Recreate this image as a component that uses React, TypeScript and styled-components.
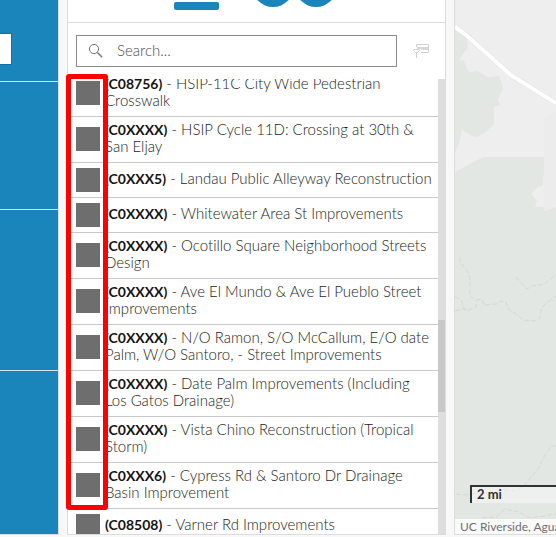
import React from "react";
import styled, { createGlobalStyle } from "styled-components";

const GlobalStyle = createGlobalStyle`
  *, *::before, *::after { box-sizing: border-box; }
  body {
    margin: 0;
    background: #f8f8f8;
    font-family: Lato, "Open Sans", sans-serif;
    font-variant-ligatures: none;
    color: #1c1c1c;
  }
`;

const Page = styled.main`
  display: grid;
  grid-template-columns: 59px minmax(0, 379fr) minmax(0, 102fr);
  column-gap: 8px;
  height: 100vh;
  padding-bottom: 2px;
  overflow: hidden;
`;

const Filters = styled.aside`
  display: flex;
  flex-direction: column;
  background: #1a85bb;
  border-right: 1px solid #dcdcdc;
  border-bottom: 1px solid #dcdcdc;
`;

const FilterBlock = styled.div<{ $height: number }>`
  flex: none;
  height: ${(p) => p.$height}px;
  padding-top: 33px;
  border-bottom: 1px solid #d3e6f0;
`;

const FilterInput = styled.input`
  display: block;
  width: 12px;
  height: 32px;
  padding: 0;
  background: #fff;
  border: 1px solid #0f6fa8;
  border-left: 0;
  outline: 0;
`;

const Panel = styled.section`
  display: flex;
  flex-direction: column;
  min-width: 0;
  min-height: 0;
  background: #fff;
  border: 1px solid #dcdcdc;
  border-top: 0;
`;

const PanelHeader = styled.header`
  flex: none;
  height: 23px;
  border-bottom: 1px solid #dcdcdc;
  text-align: center;

  svg { display: block; margin: 0 auto; }
`;

const SearchRow = styled.form`
  flex: none;
  display: flex;
  align-items: center;
  gap: 16px;
  padding: 12px 16px 12px 8px;
`;

const SearchBox = styled.label`
  flex: 1;
  min-width: 0;
  display: flex;
  align-items: center;
  gap: 13px;
  height: 32px;
  padding: 0 11px;
  border: 1px solid #8c8c8c;
`;

const SearchInput = styled.input`
  flex: 1;
  min-width: 0;
  padding: 0 0 2px;
  border: 0;
  outline: 0;
  background: none;
  font: 300 15px/20px Lato, sans-serif;
  color: #1c1c1c;

  &::placeholder { color: #4c4c4c; opacity: 1; }
`;

const IconButton = styled.button`
  display: flex;
  padding: 0;
  border: 0;
  background: none;
`;

const ListArea = styled.div`
  position: relative;
  flex: 1;
  min-height: 0;
  display: flex;
`;

const ListViewport = styled.div`
  flex: 1;
  min-width: 0;
  overflow: hidden;
`;

const List = styled.ul`
  margin: -8px 0 0;
  padding: 0;
  list-style: none;
`;

const Row = styled.li`
  display: flex;
  align-items: center;
  gap: 5px;
  min-height: 35px;
  padding: 0 0 1px 8px;
  border-bottom: 1px solid #c9c9c9;
`;

const Swatch = styled.span`
  flex: none;
  width: 24px;
  height: 24px;
  background: #6e6e6e;
`;

const RowText = styled.span`
  padding: 4px 0 6px;
  font-size: 15px;
  font-weight: 300;
  line-height: 17px;
  white-space: nowrap;
`;

const Code = styled.strong`
  font-size: 14px;
  font-weight: 700;
  color: #141414;
`;

const ScrollTrack = styled.div`
  flex: none;
  width: 8px;
  margin-right: -1px;
  padding-top: 241px;
  background: #dedede;
`;

const ScrollThumb = styled.div`
  width: 7px;
  height: 92px;
  background: #c8c8c8;
`;

const Highlight = styled.div`
  position: absolute;
  left: -2px;
  top: -5px;
  bottom: 24px;
  width: 42px;
  border: 5px solid #f00;
  border-radius: 3px;
  pointer-events: none;
`;

const MapPane = styled.section`
  position: relative;
  overflow: hidden;
  background: #e2e7e3;
  border-left: 1px solid #dcdcdc;
  border-bottom: 1px solid #dcdcdc;
`;

const MapDrawing = styled.svg`
  display: block;
  width: 100%;
  height: 100%;
`;

const ScaleBar = styled.div`
  position: absolute;
  left: 15px;
  right: 0;
  bottom: 31px;
  height: 18px;
  padding-left: 5px;
  border-left: 2px solid #323232;
  border-top: 2px solid #323232;
  background: rgba(255, 255, 255, 0.4);
  font-size: 13px;
  font-weight: 700;
  line-height: 14px;
  color: #323232;
`;

const Attribution = styled.div`
  position: absolute;
  left: 0;
  right: 0;
  bottom: 0;
  padding-left: 5px;
  background: rgba(255, 255, 255, 0.8);
  font-size: 12px;
  line-height: 15px;
  white-space: nowrap;
  color: #6e6e6e;
`;

const projects = [
  { code: "C08756", lines: ["HSIP-11C City Wide Pedestrian", "Crosswalk"] },
  { code: "C0XXXX", lines: ["HSIP Cycle 11D: Crossing at 30th &", "San Eljay"] },
  { code: "C0XXX5", lines: ["Landau Public Alleyway Reconstruction"] },
  { code: "C0XXXX", lines: ["Whitewater Area St Improvements"] },
  { code: "C0XXXX", lines: ["Ocotillo Square Neighborhood Streets", "Design"] },
  { code: "C0XXXX", lines: ["Ave El Mundo & Ave El Pueblo Street", "Improvements"] },
  { code: "C0XXXX", lines: ["N/O Ramon, S/O McCallum, E/O date", "Palm, W/O Santoro, - Street Improvements"] },
  { code: "C0XXXX", lines: ["Date Palm Improvements (Including", "Los Gatos Drainage)"] },
  { code: "C0XXXX", lines: ["Vista Chino Reconstruction (Tropical", "Storm)"] },
  { code: "C0XXX6", lines: ["Cypress Rd & Santoro Dr Drainage", "Basin Improvement"] },
  { code: "C08508", lines: ["Varner Rd Improvements"] },
];

function HeaderDrawing() {
  return (
    <svg width="166" height="22" viewBox="0 0 166 22" aria-hidden="true">
      <rect x="0" y="2" width="45" height="8" rx="2" fill="#1a85bb" />
      <circle cx="99" cy="-14" r="21" fill="#1a85bb" />
      <circle cx="142" cy="-14" r="21" fill="#1a85bb" />
    </svg>
  );
}

function SearchIcon() {
  return (
    <svg width="16" height="16" viewBox="0 0 16 16" fill="none" stroke="#757575" aria-hidden="true">
      <circle cx="6" cy="6" r="4.6" />
      <path d="M9.4 9.4 14.2 14.2" strokeWidth="1.4" />
    </svg>
  );
}

function FilterIcon() {
  return (
    <svg width="16" height="16" viewBox="0 0 16 16" fill="none" stroke="#d2d2d2" aria-hidden="true">
      <path d="M3.5 4V1.5H15.500V9.500H8" />
      <path d="M4 4H15V7H8V6H4Z" fill="#d8d8d8" stroke="none" />
      <path d="M.5 6.500H6.500V7.500L4.500 9.500H2.500L.5 7.500ZM3.500 9.500V15" fill="#fff" />
    </svg>
  );
}

function BaseMap() {
  return (
    <MapDrawing viewBox="0 0 101 534" preserveAspectRatio="xMinYMin slice" aria-hidden="true">
      <path
        d="M0 0H101V207L90 211 89 207H80L82 200 76 194 83 187 88 186 89 169 95 168 96 157H28L0 172Z"
        fill="#eeeeee"
      />
      <path d="M89 118 101 112V207L90 211 89 207Z" fill="#ececec" />
      <path
        d="M0 30 12 39 13 47 4 60 9 61 11 67 15 72 22 71 33 77 44 76 48 88 43 99 45 105 39 107V124L31 132 22 137 16 135 7 130 4 143 0 153Z"
        fill="#e2e7e3"
      />
      <path d="M0 27 10 34 57 76 101 103" fill="none" stroke="#e4e4e4" strokeWidth="5" />
      <path d="M0 27 10 34 57 76 101 103" fill="none" stroke="#fff" strokeWidth="4" />
      <g fill="none" stroke="#d3d9d5" strokeDasharray="5 2">
        <path d="M5 257V262L13 272 15 278V295L20 300 27 299 29 305 42 304 46 301 51 302 53 309 61 314 68 320 81 321 85 318 86 310 90 304 101 296" />
        <path d="M0 296 7 301 8 308 14 310 21 307 23 300M0 311 7 309 14 311" />
        <path d="M61 277 72 289 77 286 90 284 95 279 101 275" />
        <path d="M101 446H96L90 455 83 469 76 477 69 486 61 491 48 490 35 494 24 493 9 495 0 494" />
        <path d="M27 518 41 517 50 509 64 512 72 517 84 517 101 514" />
      </g>
    </MapDrawing>
  );
}

export default function App() {
  return (
    <>
      <GlobalStyle />
      <Page>
        <Filters>
          <FilterBlock $height={82}>
            <FilterInput aria-label="Filter value" />
          </FilterBlock>
          <FilterBlock $height={128} />
          <FilterBlock $height={161} />
        </Filters>

        <Panel>
          <PanelHeader>
            <HeaderDrawing />
          </PanelHeader>
          <SearchRow role="search">
            <SearchBox>
              <SearchIcon />
              <SearchInput type="text" aria-label="Search" placeholder="Search..." />
            </SearchBox>
            <IconButton type="button" aria-label="Filter list" disabled>
              <FilterIcon />
            </IconButton>
          </SearchRow>
          <ListArea>
            <ListViewport>
              <List>
                {projects.map((project, i) => (
                  <Row key={i}>
                    <Swatch />
                    <RowText>
                      <Code>({project.code})</Code> -{" "}
                      {project.lines.map((line, n) => (
                        <React.Fragment key={n}>
                          {n > 0 && <br />}
                          {line}
                        </React.Fragment>
                      ))}
                    </RowText>
                  </Row>
                ))}
              </List>
            </ListViewport>
            <ScrollTrack>
              <ScrollThumb />
            </ScrollTrack>
            <Highlight />
          </ListArea>
        </Panel>

        <MapPane>
          <BaseMap />
          <ScaleBar>2 mi</ScaleBar>
          <Attribution>UC Riverside, Agua Caliente</Attribution>
        </MapPane>
      </Page>
    </>
  );
}
